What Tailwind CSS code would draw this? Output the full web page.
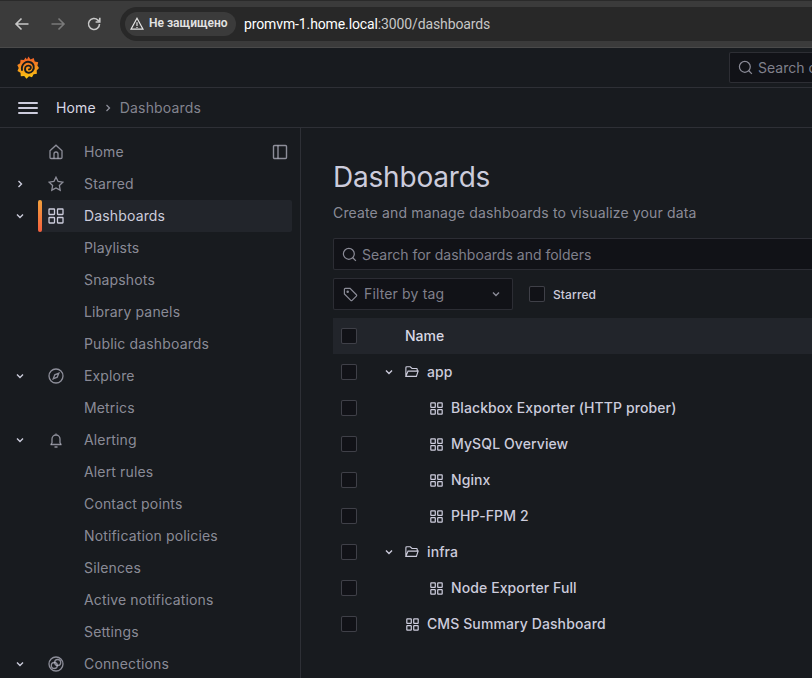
<!DOCTYPE html>
<html lang="ru">
<head>
    <meta charset="UTF-8">
    <meta name="viewport" content="width=device-width, initial-scale=1.0">
    <title>Dashboards - Grafana</title>
    <script src="https://cdn.jsdelivr.net/npm/@tailwindcss/browser@4"></script>
</head>
<body class="bg-[#181b1f] text-[#ccccdc] font-['Inter',sans-serif] text-sm h-[678px] w-[812px] overflow-hidden flex flex-col">

    <!-- Browser bar -->
    <div class="h-[48px] shrink-0 bg-[#3b3b3b] border-b border-[#4a4a4a] flex items-center pl-[13px] relative">
        <div class="absolute top-0 left-0 right-0 h-[1px] bg-[#2a2a2a]"></div>
        <svg class="w-[18px] h-[18px]" viewBox="0 0 18 18" fill="none" stroke="#c7c7c7" stroke-width="1.6"><path d="M15.5 9H3M8.500 3.500 3 9l5.500 5.500"/></svg>
        <svg class="w-[18px] h-[18px] ml-[18px]" viewBox="0 0 18 18" fill="none" stroke="#7a7a7a" stroke-width="1.6"><path d="M2.500 9H15M9.500 3.500 15 9l-5.500 5.500"/></svg>
        <svg class="w-[18px] h-[18px] ml-[18px]" viewBox="0 0 18 18" fill="none" stroke="#c7c7c7" stroke-width="1.6"><path d="M14.500 9a5.500 5.500 0 1 1-1.600-3.900L14.500 6.700"/><path d="M14.800 2.800v4.200h-4.200" /></svg>
        <div class="ml-[17px] flex-1 h-[34px] bg-[#282828] rounded-l-full flex items-center pl-[5px] overflow-hidden">
            <div class="h-[24px] w-[111px] bg-[#3b3b3b] rounded-full flex items-center pl-[5px] gap-[5px]">
                <svg class="w-[14px] h-[14px] shrink-0" viewBox="0 0 14 14" fill="none" stroke="#e3e3e3" stroke-width="1.200"><path d="M7 1.300 13 12.200H1z"/><path d="M7 5.300v3.700M7 10v1"/></svg>
                <span class="text-[12px] font-semibold text-[#e3e3e3] whitespace-nowrap font-['Roboto',sans-serif]">Не защищено</span>
            </div>
            <span class="ml-[8px] text-[14px] tracking-[-0.12px] text-[#c7c7c7] whitespace-nowrap font-['Roboto',sans-serif]"><span class="text-white">promvm-1.home.local</span>:3000/dashboards</span>
        </div>
    </div>

    <!-- Top row -->
    <div class="h-[40px] shrink-0 border-b border-[#ccccdc1f] flex items-center pl-[17px] relative">
        <svg class="w-[22px] h-[24px]" viewBox="0 0 22 24">
            <defs><linearGradient id="logoGrad" x1="0" y1="1" x2="0" y2="0"><stop offset="0" stop-color="#fbc911"/><stop offset="1" stop-color="#f05a28"/></linearGradient></defs>
            <path fill="url(#logoGrad)" d="M11.500 0.500l2 3 3.200-1.500 1 3.500 3.500.7-.8 3.300L22 12l-2.300 2.500.2 3.300-3.300.4-1.600 3-3-1-2.500 2.600-2.300-2.800-3.400.2-.3-3.400L.5 15l1.200-3L.3 9l2.900-1.800.4-3.500 3.400.4L8.500 1.500l1.500 2z"/>
            <path fill="none" stroke="#181b1f" stroke-width="1.900" stroke-linecap="round" d="M5 14C4 8 9 5 12.500 6C17 7 18 12 15.500 15C13 18 8 17 8 13C8 10 11 9 13 10C14.500 11 14 13.500 12 13.500"/>
        </svg>
        <div class="absolute left-[729px] top-[4px] h-[31px] w-[83px] bg-[#111217] border border-[#ccccdc26] border-r-0 rounded-l-[2px] flex items-center pl-[8px] gap-[5px] overflow-hidden">
            <svg class="w-[15px] h-[15px] shrink-0" viewBox="0 0 16 16" fill="none" stroke="#ccccdca6" stroke-width="1.300"><circle cx="7.300" cy="7.300" r="5.800"/><path d="m11.500 11.500 3.300 3.300"/></svg>
            <span class="text-[#ccccdc99] whitespace-nowrap">Search or jump to...</span>
        </div>
    </div>

    <!-- Breadcrumb row -->
    <div class="h-[40px] shrink-0 border-b border-[#ccccdc1f] flex items-center pl-[18px] tracking-[0.15px]">
        <svg class="w-[20px] h-[14px]" viewBox="0 0 20 14" fill="#ccccdc"><rect y="1" width="20" height="2" rx="1"/><rect y="6" width="20" height="2" rx="1"/><rect y="11" width="20" height="2" rx="1"/></svg>
        <span class="ml-[18px] text-[#d8d8e4]">Home</span>
        <svg class="w-[12px] h-[12px] ml-[6px]" viewBox="0 0 12 12" fill="none" stroke="#ccccdca6" stroke-width="1.300"><path d="m4.500 3 3 3-3 3"/></svg>
        <span class="ml-[6px] text-[#ccccdc99]">Dashboards</span>
    </div>

    <div class="flex flex-1 min-h-0">
        <!-- Sidebar -->
        <aside class="w-[301px] shrink-0 border-r border-[#ccccdc1f] pt-[8px] text-[#ccccdca6] tracking-[0.15px] relative">
            <svg class="absolute left-[272px] top-[16px] w-[16px] h-[16px]" viewBox="0 0 16 16" fill="none" stroke="#ccccdca6" stroke-width="1.400"><rect x="1.500" y="1.500" width="13" height="13" rx="1"/><path d="M6 1.500v13"/></svg>

            <div class="h-[32px] flex items-center">
                <span class="w-[48px]"></span>
                <svg class="w-[16px] h-[16px]" viewBox="0 0 16 16" fill="none" stroke="#ccccdca6" stroke-width="1.300"><path d="M2 6.800 8 1.200l6 5.600v6.700a1 1 0 0 1-1 1H3a1 1 0 0 1-1-1z"/><path d="M6 14.500V10a2 2 0 0 1 4 0v4.500"/></svg>
                <span class="ml-[20px]">Home</span>
            </div>
            <div class="h-[32px] flex items-center">
                <svg class="w-[12px] h-[12px] ml-[14px] mr-[22px]" viewBox="0 0 12 12" fill="none" stroke="#ccccdc" stroke-width="1.400"><path d="m4.500 3 3 3-3 3"/></svg>
                <svg class="w-[16px] h-[16px]" viewBox="0 0 16 16" fill="none" stroke="#ccccdca6" stroke-width="1.300"><path d="m8 1.200 2.100 4.300 4.700.7-3.400 3.300.8 4.700L8 12l-4.200 2.200.8-4.700L1.200 6.200l4.700-.7z"/></svg>
                <span class="ml-[20px]">Starred</span>
            </div>
            <div class="h-[32px] flex items-center relative bg-[#22252b] ml-[38px] w-[254px] rounded-[2px] text-[#ccccdc]">
                <span class="absolute left-0 top-0 bottom-0 w-[4px] rounded-[2px] bg-gradient-to-b from-[#f2a03c] to-[#f55f3e]"></span>
                <svg class="absolute left-[-24px] w-[12px] h-[12px]" viewBox="0 0 12 12" fill="none" stroke="#ccccdc" stroke-width="1.400"><path d="m3 4.500 3 3 3-3"/></svg>
                <svg class="w-[16px] h-[16px] ml-[10px]" viewBox="0 0 16 16" fill="none" stroke="#ccccdc" stroke-width="1.300"><rect x="1" y="1" width="5.500" height="5.500" rx=".5"/><rect x="9.500" y="1" width="5.500" height="5.500" rx=".5"/><rect x="1" y="9.500" width="5.500" height="5.500" rx=".5"/><rect x="9.500" y="9.500" width="5.500" height="5.500" rx=".5"/></svg>
                <span class="ml-[20px]">Dashboards</span>
            </div>
            <div class="h-[32px] flex items-center pl-[84px]">Playlists</div>
            <div class="h-[32px] flex items-center pl-[84px]">Snapshots</div>
            <div class="h-[32px] flex items-center pl-[84px]">Library panels</div>
            <div class="h-[32px] flex items-center pl-[84px]">Public dashboards</div>
            <div class="h-[32px] flex items-center">
                <svg class="w-[12px] h-[12px] ml-[14px] mr-[22px]" viewBox="0 0 12 12" fill="none" stroke="#ccccdc" stroke-width="1.400"><path d="m3 4.500 3 3 3-3"/></svg>
                <svg class="w-[16px] h-[16px]" viewBox="0 0 16 16" fill="none" stroke="#ccccdca6" stroke-width="1.300"><circle cx="8" cy="8" r="7"/><path d="m10.800 5.200-1.600 4-4 1.600 1.600-4z"/></svg>
                <span class="ml-[20px]">Explore</span>
            </div>
            <div class="h-[32px] flex items-center pl-[84px]">Metrics</div>
            <div class="h-[32px] flex items-center">
                <svg class="w-[12px] h-[12px] ml-[14px] mr-[22px]" viewBox="0 0 12 12" fill="none" stroke="#ccccdc" stroke-width="1.400"><path d="m3 4.500 3 3 3-3"/></svg>
                <svg class="w-[16px] h-[16px]" viewBox="0 0 16 16" fill="none" stroke="#ccccdca6" stroke-width="1.300"><path d="M4 11V7a4 4 0 0 1 8 0v4M2.500 12.500h11M6.500 15h3M8 1.500V3"/><path d="M3 12.500 4 11M13 12.500 12 11"/></svg>
                <span class="ml-[20px]">Alerting</span>
            </div>
            <div class="h-[32px] flex items-center pl-[84px]">Alert rules</div>
            <div class="h-[32px] flex items-center pl-[84px]">Contact points</div>
            <div class="h-[32px] flex items-center pl-[84px]">Notification policies</div>
            <div class="h-[32px] flex items-center pl-[84px]">Silences</div>
            <div class="h-[32px] flex items-center pl-[84px]">Active notifications</div>
            <div class="h-[32px] flex items-center pl-[84px]">Settings</div>
            <div class="h-[32px] flex items-center">
                <svg class="w-[12px] h-[12px] ml-[14px] mr-[22px]" viewBox="0 0 12 12" fill="none" stroke="#ccccdc" stroke-width="1.400"><path d="m3 4.500 3 3 3-3"/></svg>
                <svg class="w-[16px] h-[16px]" viewBox="0 0 16 16" fill="none" stroke="#ccccdca6" stroke-width="1.300"><circle cx="8" cy="8" r="7"/><circle cx="6.300" cy="9.500" r="3"/><circle cx="9.700" cy="6.500" r="3"/></svg>
                <span class="ml-[20px]">Connections</span>
            </div>
        </aside>

        <!-- Main -->
        <main class="flex-1 pl-[32px] pt-[32px] min-w-0">
            <h1 class="text-[28px] leading-[34px] tracking-[-0.2px] text-[#ccccdc] font-normal whitespace-nowrap">Dashboards</h1>
            <p class="mt-[10px] text-[#ccccdca6] leading-[18px] tracking-[0.15px] whitespace-nowrap">Create and manage dashboards to visualize your data</p>

            <div class="mt-[16px] h-[32px] w-[600px] bg-[#111217] border border-[#ccccdc26] rounded-[2px] flex items-center pl-[8px] gap-[5px]">
                <svg class="w-[15px] h-[15px] shrink-0" viewBox="0 0 16 16" fill="none" stroke="#ccccdca6" stroke-width="1.300"><circle cx="7.300" cy="7.300" r="5.800"/><path d="m11.500 11.500 3.300 3.300"/></svg>
                <span class="text-[#ccccdc99] pt-px">Search for dashboards and folders</span>
            </div>

            <div class="mt-[8px] h-[32px] flex items-center">
                <div class="w-[180px] h-[32px] bg-[#111217] border border-[#ccccdc26] rounded-[2px] flex items-center pl-[9px] relative">
                    <svg class="w-[15px] h-[15px] shrink-0" viewBox="0 0 16 16" fill="none" stroke="#ccccdca6" stroke-width="1.300"><path d="M1.500 2.500a1 1 0 0 1 1-1h5l6.800 6.800a1 1 0 0 1 0 1.400l-4.600 4.600a1 1 0 0 1-1.400 0L1.500 7.500z"/><circle cx="5" cy="5" r=".7"/></svg>
                    <span class="ml-[6px] text-[#ccccdc99] tracking-[0.15px]">Filter by tag</span>
                    <svg class="absolute right-[10px] w-[12px] h-[12px]" viewBox="0 0 12 12" fill="none" stroke="#ccccdca6" stroke-width="1.400"><path d="m3 4.500 3 3 3-3"/></svg>
                </div>
                <span class="ml-[16px] w-[16px] h-[16px] bg-[#111217] border border-[#ccccdc40] rounded-[2px]"></span>
                <span class="ml-[8px] pt-px text-[12px] font-medium text-[#ccccdc] tracking-[0.1px]">Starred</span>
            </div>

            <!-- Table -->
            <div class="mt-[8px] h-[36px] w-[600px] bg-[#22252b] flex items-center pl-[8px]">
                <span class="w-[16px] h-[16px] bg-[#111217] border border-[#ccccdc40] rounded-[2px]"></span>
                <span class="ml-[48px] font-medium text-[#d8d8e4]">Name</span>
            </div>

            <div class="tracking-[0.1px]">
                <div class="h-[36px] flex items-center pl-[8px]">
                    <span class="w-[16px] h-[16px] bg-[#111217] border border-[#ccccdc40] rounded-[2px]"></span>
                    <svg class="w-[12px] h-[12px] ml-[26px]" viewBox="0 0 12 12" fill="none" stroke="#ccccdc" stroke-width="1.400"><path d="m3 4.500 3 3 3-3"/></svg>
                    <svg class="w-[14px] h-[14px] ml-[10px]" viewBox="0 0 16 16" fill="none" stroke="#ccccdc" stroke-width="1.300"><path d="M1 13V3a1 1 0 0 1 1-1h4l2 2h5a1 1 0 0 1 1 1v2M1 13l2.500-6H15l-2 6z"/></svg>
                    <span class="ml-[8px] font-medium">app</span>
                </div>
                <div class="h-[36px] flex items-center pl-[8px]">
                    <span class="w-[16px] h-[16px] bg-[#111217] border border-[#ccccdc40] rounded-[2px]"></span>
                    <svg class="w-[13px] h-[13px] ml-[73px]" viewBox="0 0 16 16" fill="none" stroke="#ccccdc" stroke-width="1.500"><rect x="1" y="1" width="5.500" height="5.500" rx=".5"/><rect x="9.500" y="1" width="5.500" height="5.500" rx=".5"/><rect x="1" y="9.500" width="5.500" height="5.500" rx=".5"/><rect x="9.500" y="9.500" width="5.500" height="5.500" rx=".5"/></svg>
                    <span class="ml-[8px] font-medium">Blackbox Exporter (HTTP prober)</span>
                </div>
                <div class="h-[36px] flex items-center pl-[8px]">
                    <span class="w-[16px] h-[16px] bg-[#111217] border border-[#ccccdc40] rounded-[2px]"></span>
                    <svg class="w-[13px] h-[13px] ml-[73px]" viewBox="0 0 16 16" fill="none" stroke="#ccccdc" stroke-width="1.500"><rect x="1" y="1" width="5.500" height="5.500" rx=".5"/><rect x="9.500" y="1" width="5.500" height="5.500" rx=".5"/><rect x="1" y="9.500" width="5.500" height="5.500" rx=".5"/><rect x="9.500" y="9.500" width="5.500" height="5.500" rx=".5"/></svg>
                    <span class="ml-[8px] font-medium">MySQL Overview</span>
                </div>
                <div class="h-[36px] flex items-center pl-[8px]">
                    <span class="w-[16px] h-[16px] bg-[#111217] border border-[#ccccdc40] rounded-[2px]"></span>
                    <svg class="w-[13px] h-[13px] ml-[73px]" viewBox="0 0 16 16" fill="none" stroke="#ccccdc" stroke-width="1.500"><rect x="1" y="1" width="5.500" height="5.500" rx=".5"/><rect x="9.500" y="1" width="5.500" height="5.500" rx=".5"/><rect x="1" y="9.500" width="5.500" height="5.500" rx=".5"/><rect x="9.500" y="9.500" width="5.500" height="5.500" rx=".5"/></svg>
                    <span class="ml-[8px] font-medium">Nginx</span>
                </div>
                <div class="h-[36px] flex items-center pl-[8px]">
                    <span class="w-[16px] h-[16px] bg-[#111217] border border-[#ccccdc40] rounded-[2px]"></span>
                    <svg class="w-[13px] h-[13px] ml-[73px]" viewBox="0 0 16 16" fill="none" stroke="#ccccdc" stroke-width="1.500"><rect x="1" y="1" width="5.500" height="5.500" rx=".5"/><rect x="9.500" y="1" width="5.500" height="5.500" rx=".5"/><rect x="1" y="9.500" width="5.500" height="5.500" rx=".5"/><rect x="9.500" y="9.500" width="5.500" height="5.500" rx=".5"/></svg>
                    <span class="ml-[8px] font-medium">PHP-FPM 2</span>
                </div>
                <div class="h-[36px] flex items-center pl-[8px]">
                    <span class="w-[16px] h-[16px] bg-[#111217] border border-[#ccccdc40] rounded-[2px]"></span>
                    <svg class="w-[12px] h-[12px] ml-[26px]" viewBox="0 0 12 12" fill="none" stroke="#ccccdc" stroke-width="1.400"><path d="m3 4.500 3 3 3-3"/></svg>
                    <svg class="w-[14px] h-[14px] ml-[10px]" viewBox="0 0 16 16" fill="none" stroke="#ccccdc" stroke-width="1.300"><path d="M1 13V3a1 1 0 0 1 1-1h4l2 2h5a1 1 0 0 1 1 1v2M1 13l2.500-6H15l-2 6z"/></svg>
                    <span class="ml-[8px] font-medium">infra</span>
                </div>
                <div class="h-[36px] flex items-center pl-[8px]">
                    <span class="w-[16px] h-[16px] bg-[#111217] border border-[#ccccdc40] rounded-[2px]"></span>
                    <svg class="w-[13px] h-[13px] ml-[73px]" viewBox="0 0 16 16" fill="none" stroke="#ccccdc" stroke-width="1.500"><rect x="1" y="1" width="5.500" height="5.500" rx=".5"/><rect x="9.500" y="1" width="5.500" height="5.500" rx=".5"/><rect x="1" y="9.500" width="5.500" height="5.500" rx=".5"/><rect x="9.500" y="9.500" width="5.500" height="5.500" rx=".5"/></svg>
                    <span class="ml-[8px] font-medium">Node Exporter Full</span>
                </div>
                <div class="h-[36px] flex items-center pl-[8px]">
                    <span class="w-[16px] h-[16px] bg-[#111217] border border-[#ccccdc40] rounded-[2px]"></span>
                    <svg class="w-[13px] h-[13px] ml-[49px]" viewBox="0 0 16 16" fill="none" stroke="#ccccdc" stroke-width="1.500"><rect x="1" y="1" width="5.500" height="5.500" rx=".5"/><rect x="9.500" y="1" width="5.500" height="5.500" rx=".5"/><rect x="1" y="9.500" width="5.500" height="5.500" rx=".5"/><rect x="9.500" y="9.500" width="5.500" height="5.500" rx=".5"/></svg>
                    <span class="ml-[8px] font-medium">CMS Summary Dashboard</span>
                </div>
            </div>
        </main>
    </div>

</body>
</html>
